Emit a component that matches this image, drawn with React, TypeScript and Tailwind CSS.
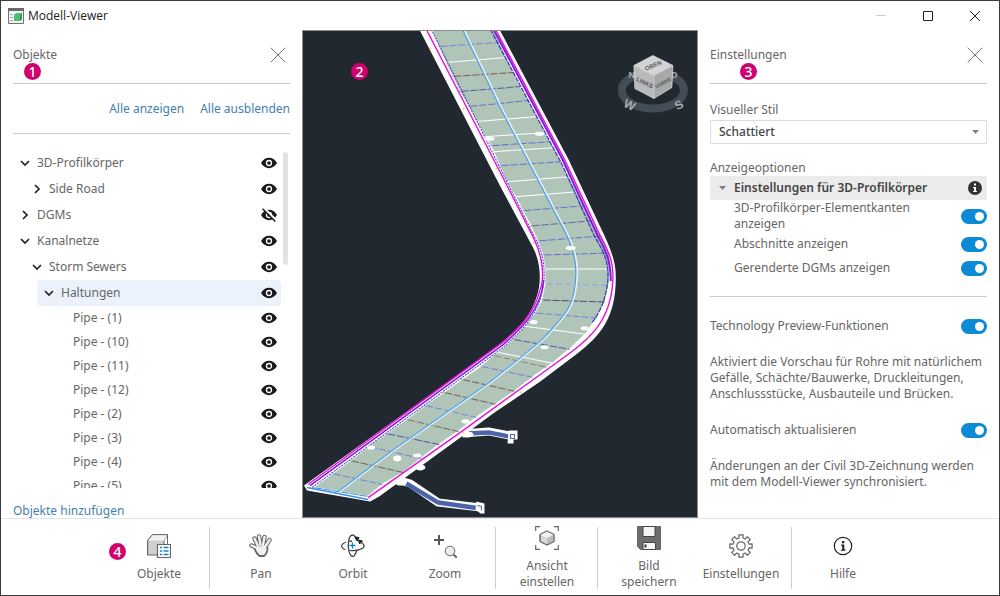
import type { ReactNode } from "react";

interface TreeItem {
  label: string;
  level: number;
  state?: "open" | "closed";
  hidden?: boolean;
  selected?: boolean;
}

const treeItems: TreeItem[] = [
  { label: "3D-Profilkörper", level: 0, state: "open" },
  { label: "Side Road", level: 1, state: "closed" },
  { label: "DGMs", level: 0, state: "closed", hidden: true },
  { label: "Kanalnetze", level: 0, state: "open" },
  { label: "Storm Sewers", level: 1, state: "open" },
  { label: "Haltungen", level: 2, state: "open", selected: true },
  { label: "Pipe - (1)", level: 3 },
  { label: "Pipe - (10)", level: 3 },
  { label: "Pipe - (11)", level: 3 },
  { label: "Pipe - (12)", level: 3 },
  { label: "Pipe - (2)", level: 3 },
  { label: "Pipe - (3)", level: 3 },
  { label: "Pipe - (4)", level: 3 },
  { label: "Pipe - (5)", level: 3 },
];

const indents = ["ml-0", "ml-3", "ml-6", "ml-9"];

// left and right end of every corridor section, top to bottom
const sections: [number, number, number, number, string][] = [
  [129, 0, 190, -3, "#6f86cf"],
  [136, 17, 197, 13, "#6f86cf"],
  [143, 33, 204, 28, "#ffffff"],
  [150, 47, 211, 43, "#7a5f4c"],
  [157, 62, 218, 57, "#4f5fa8"],
  [166, 77, 226, 71, "#5f74c4"],
  [174, 92, 235, 87, "#ffffff"],
  [182, 107, 243, 103, "#ffffff"],
  [188, 116, 248, 112, "#5f74c4"],
  [191, 122, 251, 118, "#ffffff"],
  [197, 136, 258, 132, "#5f74c4"],
  [204, 152, 266, 147, "#ffffff"],
  [213, 167, 275, 162, "#ffffff"],
  [220, 181, 282, 176, "#5f74c4"],
  [228, 196, 290, 191, "#5f6b9c"],
  [235, 211, 299, 206, "#5f74c4"],
  [240, 225, 307, 223, "#5f74c4"],
  [242, 239, 308, 239, "#ffffff"],
  [242, 254, 306, 255, "#8fa4dd"],
  [239, 270, 302, 272, "#4a4a78"],
  [232, 283, 294, 288, "#6f86cf"],
  [222, 296, 283, 304, "#ffffff"],
  [210, 309, 267, 319, "#4f5fa8"],
  [195, 322, 250, 333, "#ffffff"],
  [190, 325, 244, 337, "#8b8470"],
  [178, 336, 230, 347, "#6f86cf"],
  [159, 349, 212, 361, "#6d6658"],
  [141, 362, 193, 374, "#6d6658"],
  [122, 375, 174, 387, "#6f86cf"],
  [104, 389, 156, 401, "#6d6658"],
  [84, 403, 137, 414, "#4f5fa8"],
  [66, 416, 119, 428, "#6f86cf"],
  [48, 430, 101, 442, "#6d6658"],
  [30, 443, 80, 454, "#6f86cf"],
  [11, 457, 66, 466, "#3f8fe0"],
];

const surface = [
  ...sections.map(([x, y]) => `${x},${y}`),
  ...[...sections].reverse().map(([, , x, y]) => `${x},${y}`),
].join(" ");

const gearPath = (() => {
  const points: string[] = [];
  for (let i = 0; i < 8; i++) {
    const base = (i * Math.PI) / 4;
    const corners = [[-0.24, 8.2], [-0.19, 11.3], [0.19, 11.3], [0.24, 8.2]];
    corners.forEach(([angle, radius]) => {
      const x = 12 + radius * Math.cos(base + angle);
      const y = 12 + radius * Math.sin(base + angle);
      points.push(`${x.toFixed(2)} ${y.toFixed(2)}`);
    });
  }
  return `M${points.join("L")}Z`;
})();

function Badge({ children, className }: { children: ReactNode; className: string }) {
  return (
    <span
      className={`absolute flex h-[17px] w-[17px] items-center justify-center rounded-full bg-[#d1006f] text-sm font-medium leading-4 text-white ${className}`}
    >
      {children}
    </span>
  );
}

function CloseIcon({ size }: { size: number }) {
  return (
    <svg width={size} height={size} viewBox="0 0 16 16" fill="none" stroke="currentColor">
      <path d="M.7.7l14.6 14.6M15.3.7L.7 15.3" />
    </svg>
  );
}

function EyeIcon({ hidden }: { hidden?: boolean }) {
  return (
    <svg width="16" height="14" viewBox="0 0 16 14">
      <path d="M0 7C2 3.600 4.800 1.800 8 1.800S14 3.600 16 7C14 10.400 11.200 12.200 8 12.200S2 10.400 0 7Z" fill="#1a1a1a" />
      <circle cx="8" cy="7" r="2.500" fill="#1a1a1a" stroke="#fff" strokeWidth="1.300" />
      {hidden && (
        <>
          <path d="M2.500-.5L16 13" stroke="#fff" strokeWidth="2.200" />
          <path d="M1.500.8L14.300 13.500" stroke="#1a1a1a" strokeWidth="1.500" />
        </>
      )}
    </svg>
  );
}

function TreeRow({ item }: { item: TreeItem }) {
  return (
    <li
      className={`flex shrink-0 items-center rounded-sm ${indents[item.level]} ${item.state ? "h-[26px]" : "h-6"} ${
        item.selected ? "bg-[#ebf2fb]" : ""
      }`}
    >
      {item.state ? (
        <button className="flex h-full items-center" aria-expanded={item.state === "open"}>
          <span className="flex w-6 justify-center">
            <svg width="10" height="10" viewBox="0 0 10 10" fill="none" stroke="#222" strokeWidth="1.700">
              <path d={item.state === "open" ? "M1 3l4 4 4-4" : "M3 1l4 4-4 4"} />
            </svg>
          </span>
          {item.label}
        </button>
      ) : (
        <span className="pl-6">{item.label}</span>
      )}
      <button
        className="ml-auto mr-1 flex h-full items-center"
        aria-label={`${item.label} ${item.hidden ? "anzeigen" : "ausblenden"}`}
      >
        <EyeIcon hidden={item.hidden} />
      </button>
    </li>
  );
}

function PanelHeader({ title }: { title: string }) {
  return (
    <div className="flex h-[54px] shrink-0 items-center justify-between border-b border-[#cbcbcb] pb-1">
      <h2>{title}</h2>
      <button className="mr-1 text-[#777]" aria-label={`${title} schließen`}>
        <CloseIcon size={16} />
      </button>
    </div>
  );
}

function ObjectsPanel() {
  return (
    <section className="relative flex w-[301px] shrink-0 flex-col px-3">
      <PanelHeader title="Objekte" />
      <Badge className="left-[23px] top-[33px]">1</Badge>
      <div className="flex h-[50px] shrink-0 items-center justify-end gap-4 border-b border-[#cbcbcb] text-[#4480ad]">
        <button>Alle anzeigen</button>
        <button>Alle ausblenden</button>
      </div>
      <div className="mt-4 flex min-h-0 flex-1 gap-[2px]">
        <ul className="flex min-w-0 flex-1 flex-col overflow-hidden">
          {treeItems.map((item) => (
            <TreeRow key={item.label} item={item} />
          ))}
        </ul>
        <div className="mr-[2px] mt-[2px] h-1/3 w-[5px] rounded-full bg-[#e2e2e2]" />
      </div>
      <div className="flex h-[30px] shrink-0 items-end pb-px leading-3 text-[#4480ad]">
        <button>Objekte hinzufügen</button>
      </div>
    </section>
  );
}

function ViewCube() {
  return (
    <g fontFamily="Liberation Sans, sans-serif" fontWeight="700" textAnchor="middle">
      <ellipse cx="350" cy="61" rx="31" ry="18" fill="none" stroke="#444c57" strokeWidth="8" />
      <g fontSize="12" fill="#a9acaf">
        <text x="329" y="49" fontSize="9">N</text>
        <text x="371" y="49" fontSize="9">O</text>
        <text transform="translate(325 79) rotate(25)">W</text>
        <text transform="translate(378 79) rotate(-30)">S</text>
      </g>
      <path d="M331 36L350 26L370 36L351 46Z" fill="#d2d3d4" />
      <path d="M331 36L351 46V69L332 59Z" fill="#b9babc" />
      <path d="M351 46L370 36L369 58L351 69Z" fill="#a6a8aa" />
      <path d="M331 36L350 26L370 36L351 46ZL332 59L351 69L369 58L370 36M351 46V69" fill="none" stroke="#eeeeee" strokeWidth=".6" />
      <g fontSize="6" fill="#55585c">
        <text transform="translate(351 38) rotate(-22)">OBEN</text>
        <text transform="translate(341 55) rotate(26)">LINKS</text>
        <text transform="translate(361 55) rotate(-29)" fontSize="5">VORNE</text>
      </g>
    </g>
  );
}

function ModelView() {
  return (
    <main className="relative min-w-0 flex-1 overflow-hidden border border-[#8c8c88] bg-[#212830]">
      <svg className="block h-full w-full" viewBox="1 1 393 486" preserveAspectRatio="xMidYMid slice">
        {/* storm sewer pipes beside the road */}
        <g fill="none" strokeLinejoin="round">
          <path d="M160 403L186 401L211 406M98 450L108 453L136 472L178 477" stroke="#fff" strokeWidth="8" />
          <path d="M164 403L186 402L206 406M104 453L136 472L178 478" stroke="#4c64aa" strokeWidth="4.500" />
          <path d="M206 400h9v9h-4v4h-6zM174 471l8 2v10h-4l-5-4z" fill="#fff" />
          <path d="M208 404h4v4h-4zM175 475l4 1v4" stroke="#4c64aa" />
        </g>
        <path
          d="M117 0L198 157L228 213C239 231 239 253 234 267C228 287 212 303 198 314L2 455L5 460L68 471L77 466L158 407L191 383L238 351L275 323C297 306 313 288 313 248C313 235 311 225 299 200L266 130L197 0Z"
          fill="#fff"
        />
        <polygon points={surface} fill="#b0c4b8" stroke="#fff" strokeWidth="1.500" />
        <g fill="none" strokeWidth="1">
          {sections.map(([x1, y1, x2, y2, color]) => (
            <path key={`${x1}-${y1}`} d={`M${x1} ${y1}L${x2} ${y2}`} stroke={color} />
          ))}
          {sections.map(([x1, y1, x2, y2]) => (
            <path
              key={`${x1}-${y1}`}
              d={`M${x1} ${y1}L${x2} ${y2}`}
              stroke="#e6eef5"
              strokeDasharray="2 7"
              strokeOpacity=".7"
            />
          ))}
        </g>
        <g fill="none">
          <path
            d="M161 0L198 77L231 140L258 192C273 218 275 233 274 248C272 279 263 284 243 307Q229 320 188 352L91 420L37 461"
            stroke="#e4f2fa"
            strokeWidth="2.500"
          />
          <path
            d="M160 0L197 77L230 140L257 192C272 218 274 233 273 248C271 279 262 284 242 307Q228 320 187 352L90 420L36 461"
            stroke="#4b9be0"
            strokeWidth="1.200"
          />
          <path
            d="M129 0L205 153L234 211C243 228 243 250 239 264C233 289 215 304 201 317L10 457"
            stroke="#403ac0"
            strokeDasharray="2 1"
          />
          <path
            d="M241 250C239 280 217 300 200 315L8 455"
            stroke="#7b1fd8"
            strokeWidth="1.500"
          />
          <path
            d="M124 0L199 145L231 208C241 228 242 250 237 261C231 286 213 301 199 313L6 454"
            stroke="#e80fd6"
            strokeWidth="1.400"
          />
          <path
            d="M188 0L260 136L292 207C304 226 306 236 305 252C303 267 299 280 289 293"
            stroke="#403ac0"
            strokeWidth="1.300"
            strokeDasharray="5 1"
          />
          <path d="M191 0L260 130L295 206C306 225 308 236 308 251" stroke="#7b1fd8" strokeWidth="2" />
          <path
            d="M193 0L262 130L297 205C308 225 311 235 310 251C308 291 286 309 267 323L158 402L66 467"
            stroke="#e80fd6"
            strokeWidth="1.400"
          />
          <path d="M5 457L66 469" stroke="#3f8fe0" strokeWidth="1.500" />
        </g>
        <g fill="#fff">
          <ellipse cx="187" cy="109" rx="5" ry="2" />
          <ellipse cx="237" cy="104" rx="5" ry="2" />
          <ellipse cx="268" cy="218" rx="5" ry="2" />
          <ellipse cx="231" cy="292" rx="4" ry="2" />
          <ellipse cx="282" cy="298" rx="4" ry="2" />
          <ellipse cx="242" cy="317" rx="4" ry="2" />
          <ellipse cx="163" cy="391" rx="4" ry="2" />
          <ellipse cx="165" cy="404" rx="6" ry="3" />
          <ellipse cx="69" cy="417" rx="4" ry="2" />
          <ellipse cx="95" cy="428" rx="4" ry="3" />
          <ellipse cx="115" cy="425" rx="4" ry="2" />
          <ellipse cx="118" cy="437" rx="5" ry="3" />
          <ellipse cx="98" cy="452" rx="5" ry="3" />
        </g>
        <g fill="#f7c948">
          <circle cx="128" cy="19" r="1" />
          <circle cx="161" cy="79" r="1" />
          <circle cx="194" cy="139" r="1" />
          <circle cx="231" cy="213" r="1" />
          <circle cx="286" cy="308" r="1" />
          <circle cx="218" cy="362" r="1" />
          <circle cx="161" cy="402" r="1" />
        </g>
        <ViewCube />
      </svg>
      <Badge className="left-[48px] top-[32px]">2</Badge>
    </main>
  );
}

function ToggleRow({ label, className }: { label: string; className: string }) {
  return (
    <label className={`flex items-center justify-between gap-3 ${className}`}>
      <span className="max-w-[212px]">{label}</span>
      <input
        type="checkbox"
        role="switch"
        defaultChecked
        className="flex h-[15px] w-[26px] shrink-0 appearance-none items-center rounded-full bg-[#aaa] px-[3px] before:h-[9px] before:w-[9px] before:rounded-full before:bg-white checked:justify-end checked:bg-[#0c8ad6]"
      />
    </label>
  );
}

function SettingsPanel() {
  return (
    <section className="relative flex w-[301px] shrink-0 flex-col px-3">
      <PanelHeader title="Einstellungen" />
      <Badge className="left-[42px] top-[33px]">3</Badge>
      <label htmlFor="visual-style" className="mt-[18px]">
        Visueller Stil
      </label>
      <div className="relative mt-[2px]">
        <select
          id="visual-style"
          className="block h-6 w-full appearance-none border border-[#dcdcdc] bg-white pl-2 font-medium text-[#444]"
        >
          <option>Schattiert</option>
        </select>
        <svg className="pointer-events-none absolute right-2 top-[10px]" width="7" height="4" viewBox="0 0 7 4">
          <path d="M0 0h7L3.500 4z" fill="#808080" />
        </svg>
      </div>
      <h3 className="mt-4">Anzeigeoptionen</h3>
      <div className="flex h-6 shrink-0 items-center bg-[#ebebeb] pr-[5px]">
        <button className="flex items-center font-semibold text-[#444]" aria-expanded="true">
          <span className="flex w-6 justify-center">
            <svg width="7" height="4" viewBox="0 0 7 4">
              <path d="M0 0h7L3.500 4z" fill="#808080" />
            </svg>
          </span>
          Einstellungen für 3D-Profilkörper
        </button>
        <button className="ml-auto" aria-label="Informationen">
          <svg width="14" height="14" viewBox="0 0 14 14">
            <circle cx="7" cy="7" r="7" fill="#333" />
            <path d="M6 2.500h2v2H6zM5 6h3v4h1v1H5v-1h1V7H5z" fill="#fff" />
          </svg>
        </button>
      </div>
      <ToggleRow label="3D-Profilkörper-Elementkanten anzeigen" className="min-h-8 pl-6" />
      <ToggleRow label="Abschnitte anzeigen" className="min-h-6 pl-6" />
      <ToggleRow label="Gerenderte DGMs anzeigen" className="min-h-6 pl-6" />
      <hr className="mt-4 border-[#cbcbcb]" />
      <ToggleRow label="Technology Preview-Funktionen" className="mt-[21px]" />
      <p className="mt-5">
        Aktiviert die Vorschau für Rohre mit natürlichem Gefälle, Schächte/Bauwerke, Druckleitungen, Anschlussstücke,
        Ausbauteile und Brücken.
      </p>
      <ToggleRow label="Automatisch aktualisieren" className="mt-5" />
      <p className="mt-5">Änderungen an der Civil 3D-Zeichnung werden mit dem Modell-Viewer synchronisiert.</p>
    </section>
  );
}

function ToolIcon({ children }: { children: ReactNode }) {
  return (
    <svg width="24" height="24" viewBox="0 0 24 24" fill="none" stroke="#666">
      {children}
    </svg>
  );
}

function ToolButton({ label, icon, children }: { label: string; icon: ReactNode; children?: ReactNode }) {
  return (
    <button className="relative flex w-[92px] flex-col items-center justify-center gap-2 px-2">
      <ToolIcon>{icon}</ToolIcon>
      <span>{label}</span>
      {children}
    </button>
  );
}

function Divider() {
  return <div className="mx-1 my-1.5 w-[2px] border-l border-[#cfcfcf]" />;
}

const handLines = "M8 14L2.500 11.500M9 12L5.500 4.500M11.500 11L10 2.500M14 11L15.500 3M16 13L20.500 6";

const icons = {
  objects: (
    <>
      <path d="M.6 6.500L5.500.6H20.500L17 6.500V21H.6Z" fill="#cfcfcf" />
      <path d="M.6 6.500L5.500.6H20.500L17 6.500Z" fill="#f1f1f1" stroke="none" />
      <path d="M.6 21V6.500L5.500.6H20.500V10" />
      <path d="M10.500 10.500h13v13h-13z" fill="#fff" strokeWidth="1.200" />
      <path d="M13 13.500h2M13 17h2M13 20.500h2M16.500 13.500h5M16.500 17h5M16.500 20.500h5" stroke="#1685c7" strokeWidth="1.400" />
    </>
  ),
  hand: (
    <g strokeLinecap="round" strokeLinejoin="round">
      <path d={handLines} strokeWidth="4.400" />
      <path d="M8 12L16.500 11L18.500 14Q18 20 15 22H10.500Q8 20 6 15.500Z" fill="#f0f0f0" strokeWidth="2" />
      <path d={handLines} stroke="#f0f0f0" strokeWidth="2.400" />
      <path d="M8 13L16.500 12L17.500 15Q17 19.500 14.500 21H11Q9 19 7 16Z" fill="#f0f0f0" stroke="none" />
    </g>
  ),
  orbit: (
    <>
      <path d="M15 5C14 .5 10.500-.5 8.500 3.500C6.500 9 7 18 10 21.500C12 24 14.500 21 15.500 17" stroke="#444" strokeWidth="1.300" />
      <path d="M5 8C-1 10.500-.5 14 4.500 15.500M8.500 16.300C14 17 19 16 22 14C24 12 23 10 20 8.500M8.500 7.500L11 7" stroke="#444" strokeWidth="1.300" />
      <path d="M14 3l4 .5-2 3.500zM17.500 6l4 1-3 3z" fill="#222" stroke="#222" />
      <path d="M11.500 8.500v6M8.500 11.500h6" stroke="#1685c7" strokeWidth="1.300" />
    </>
  ),
  zoom: (
    <>
      <path d="M6 1v10M1 6h10" stroke="#555" strokeWidth="2" />
      <circle cx="17" cy="17" r="4.800" fill="#ececec" />
      <path d="M20.500 20.500L24 24" strokeWidth="2" />
    </>
  ),
  fit: (
    <>
      <path d="M.7 5V.7H5M19 .7h4.300V5M.7 19v4.300H5M19 23.300h4.300V19" strokeWidth="1.200" />
      <path d="M12 5L19 8.500V15.500L12 19L5 15.500V8.500Z" fill="#d8d8d8" />
      <path d="M5 8.500L12 12L19 8.500L12 5Z" fill="#f2f2f2" stroke="none" />
      <path d="M12 12L19 8.500V15.500L12 19Z" fill="#bdbdbd" stroke="none" />
      <path d="M12 5L19 8.500V15.500L12 19L5 15.500V8.500Z" />
    </>
  ),
  save: (
    <>
      <path d="M.5.5H23.500V23.500H3.500L.5 20.500Z" fill="#6d6d6d" />
      <path d="M6 .5h12v10H6z" fill="#f5f5f5" stroke="#444" />
      <path d="M6 16.500h12.500v7H6z" fill="#f5f5f5" stroke="#444" />
      <path d="M8.500 18.500v3" stroke="#333" strokeWidth="2" />
    </>
  ),
  gear: (
    <>
      <path d={gearPath} strokeLinejoin="round" strokeWidth="1.200" />
      <circle cx="12" cy="12" r="4.200" strokeWidth="1.200" />
    </>
  ),
  help: (
    <>
      <circle cx="12" cy="12" r="8.700" stroke="#222" strokeWidth="1.200" />
      <path d="M11 7h2.300v2.200H11zM10 10.500h3.300v5h1.200v1.300H10v-1.300h1.200v-3.700H10z" fill="#222" stroke="none" />
    </>
  ),
};

function Toolbar() {
  return (
    <nav className="flex h-[77px] shrink-0 justify-center border-t border-[#e4e4e4] pl-[2px] pt-[2px]">
      <ToolButton label="Objekte" icon={icons.objects}>
        <Badge className="-left-1 top-[22px]">4</Badge>
      </ToolButton>
      <Divider />
      <ToolButton label="Pan" icon={icons.hand} />
      <ToolButton label="Orbit" icon={icons.orbit} />
      <ToolButton label="Zoom" icon={icons.zoom} />
      <Divider />
      <ToolButton label="Ansicht einstellen" icon={icons.fit} />
      <Divider />
      <ToolButton label="Bild speichern" icon={icons.save} />
      <ToolButton label="Einstellungen" icon={icons.gear} />
      <Divider />
      <ToolButton label="Hilfe" icon={icons.help} />
    </nav>
  );
}

function TitleBar() {
  return (
    <header className="flex h-[29px] shrink-0 items-center pl-[7px] pr-px text-[#222]">
      <svg width="16" height="16" viewBox="0 0 16 16">
        <path d="M.5.5h15v15H.5z" fill="#f4f4f4" stroke="#707070" />
        <path d="M0 0h16v3H0z" fill="#686868" />
        <path d="M2 6.500h3M2 9.500h3M2 12.500h3" stroke="#aaa" />
        <path d="M6 7l2-2h6v6l-2 2H6z" fill="#4dbd78" />
        <path d="M12 7l2-2v6l-2 2z" fill="#2d9858" />
      </svg>
      <h1 className="ml-1 font-['Open_Sans',sans-serif]">Modell-Viewer</h1>
      <div className="ml-auto flex h-full">
        <button className="flex w-[47px] items-center justify-center" aria-label="Minimieren" disabled>
          <svg width="10" height="10" viewBox="0 0 10 10" stroke="#ccc">
            <path d="M0 4.500h10" />
          </svg>
        </button>
        <button className="flex w-[47px] items-center justify-center" aria-label="Maximieren">
          <svg width="10" height="10" viewBox="0 0 10 10" fill="none" stroke="#222">
            <path d="M.5.5h9v9h-9z" />
          </svg>
        </button>
        <button className="flex w-[47px] items-center justify-center" aria-label="Schließen">
          <svg width="10" height="10" viewBox="0 0 10 10" stroke="#222">
            <path d="M0 0l10 10M10 0L0 10" />
          </svg>
        </button>
      </div>
    </header>
  );
}

export default function App() {
  return (
    <div className="flex h-screen flex-col overflow-hidden border border-[#3c3c3f] bg-white font-['Noto_Sans',sans-serif] text-xs leading-4 text-[#666]">
      <TitleBar />
      <div className="flex min-h-0 flex-1">
        <ObjectsPanel />
        <ModelView />
        <SettingsPanel />
      </div>
      <Toolbar />
    </div>
  );
}
